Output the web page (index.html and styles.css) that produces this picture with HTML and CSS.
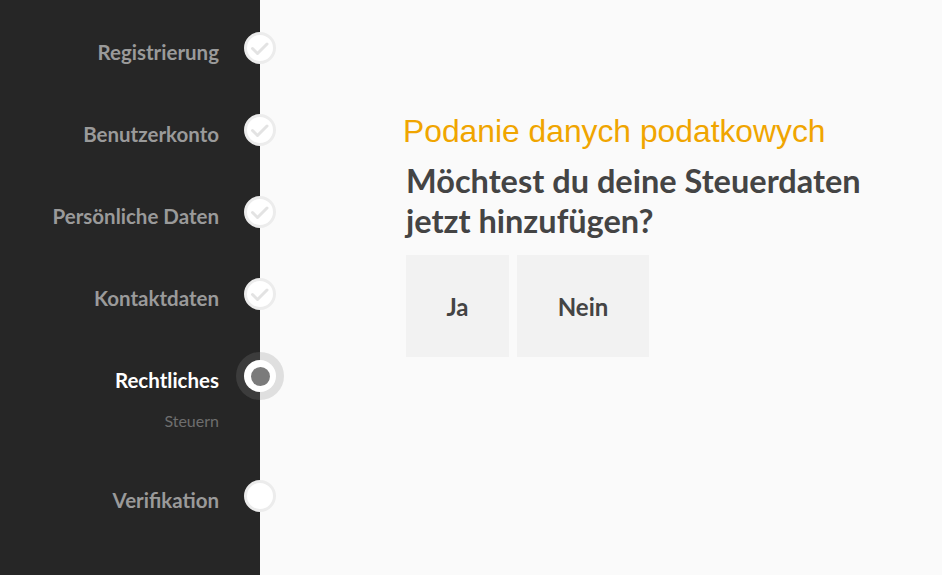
FILE: index.html
```html
<!DOCTYPE html>
<html lang="de">
<head>
<meta charset="utf-8">
<title>Steuerdaten</title>
<link rel="stylesheet" href="styles.css">
</head>
<body>
<div class="app">
  <aside class="sidebar">
    <ol class="steps">
      <li class="step done">
        <span class="label">Registrierung</span>
        <span class="marker"><span class="dot"><svg viewBox="0 0 32 32"><path d="M8.5 16.5 L13.5 21.5 L23 12"/></svg></span></span>
      </li>
      <li class="step done">
        <span class="label">Benutzerkonto</span>
        <span class="marker"><span class="dot"><svg viewBox="0 0 32 32"><path d="M8.5 16.5 L13.5 21.5 L23 12"/></svg></span></span>
      </li>
      <li class="step done">
        <span class="label">Persönliche Daten</span>
        <span class="marker"><span class="dot"><svg viewBox="0 0 32 32"><path d="M8.5 16.5 L13.5 21.5 L23 12"/></svg></span></span>
      </li>
      <li class="step done">
        <span class="label">Kontaktdaten</span>
        <span class="marker"><span class="dot"><svg viewBox="0 0 32 32"><path d="M8.5 16.5 L13.5 21.5 L23 12"/></svg></span></span>
      </li>
      <li class="step active">
        <span class="label">Rechtliches</span>
        <span class="marker"><span class="ring"><span class="dot"><span class="core"></span></span></span></span>
        <span class="sub">Steuern</span>
      </li>
      <li class="step todo">
        <span class="label">Verifikation</span>
        <span class="marker"><span class="dot"></span></span>
      </li>
    </ol>
  </aside>
  <main class="content">
    <h2 class="title">Podanie danych podatkowych</h2>
    <h1 class="question">Möchtest du deine Steuerdaten<br>jetzt hinzufügen?</h1>
    <div class="choices">
      <button class="choice choice-ja" type="button">Ja</button>
      <button class="choice choice-nein" type="button">Nein</button>
    </div>
  </main>
</div>
</body>
</html>
```

FILE: styles.css
```css
html, body {
  margin: 0;
  padding: 0;
}
body {
  background: #fafafa;
  font-family: Lato, "Open Sans", sans-serif;
  overflow: hidden;
}
.app {
  display: flex;
  width: 942px;
  height: 575px;
}
.sidebar {
  flex: 0 0 260px;
  background: #262626;
  position: relative;
  z-index: 1;
}
.steps {
  list-style: none;
  margin: 24px -24px 0 0;
  padding: 0;
  display: flex;
  flex-direction: column;
  gap: 34px;
}
.step {
  display: grid;
  grid-template-columns: 1fr 48px;
  column-gap: 17px;
  align-items: center;
}
.label {
  text-align: right;
  font-weight: 700;
  font-size: 20.5px;
  line-height: 24px;
  color: #9a9a9a;
  padding-top: 8px;
}
.active .label {
  color: #ffffff;
}
.sub {
  grid-column: 1;
  text-align: right;
  font-size: 16px;
  line-height: 20px;
  color: #6e6e6e;
  margin: 11px 0 7px;
}
.marker {
  width: 48px;
  height: 48px;
  display: flex;
  align-items: center;
  justify-content: center;
}
.dot {
  width: 32px;
  height: 32px;
  box-sizing: border-box;
  border-radius: 50%;
  background: #ffffff;
  border: 3px solid #ececec;
  display: flex;
  align-items: center;
  justify-content: center;
}
.dot svg {
  width: 32px;
  height: 32px;
  flex: none;
}
.dot path {
  fill: none;
  stroke: #e3e3e3;
  stroke-width: 3;
  stroke-linecap: round;
  stroke-linejoin: round;
}
.ring {
  width: 48px;
  height: 48px;
  border-radius: 50%;
  background: rgba(135, 135, 135, 0.23);
  display: flex;
  align-items: center;
  justify-content: center;
}
.active .dot {
  border: none;
}
.core {
  width: 19px;
  height: 19px;
  border-radius: 50%;
  background: #7b7b7b;
}
.content {
  flex: 1;
  padding: 113px 0 0 143px;
}
.title {
  margin: 0;
  font-family: "Liberation Sans", Arial, sans-serif;
  font-weight: 400;
  font-size: 31.8px;
  line-height: 37px;
  color: #f0a500;
}
.question {
  margin: 11px 0 0 3px;
  font-family: Lato, sans-serif;
  font-weight: 700;
  font-size: 32.5px;
  line-height: 40px;
  color: #444444;
}
.choices {
  display: flex;
  gap: 8px;
  margin: 14px 0 0 3px;
}
.choice {
  border: none;
  background: #f2f2f2;
  height: 102px;
  font-family: Lato, sans-serif;
  font-weight: 700;
  font-size: 24px;
  color: #444444;
  padding: 0;
}
.choice-ja {
  width: 103px;
}
.choice-nein {
  width: 132px;
}
```
